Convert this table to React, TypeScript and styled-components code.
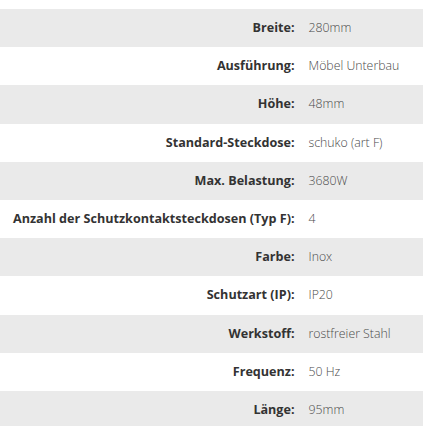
import React from "react";
import styled, { createGlobalStyle } from "styled-components";

const Global = createGlobalStyle`
  html, body { margin: 0; padding: 0; background: #fff; }
  body { font-family: "Open Sans", "Liberation Sans", sans-serif; }
`;

const Wrapper = styled.div`
  padding-top: 9px;
`;

const Table = styled.table`
  width: 100%;
  border-collapse: collapse;
  border-spacing: 0;
`;

const Row = styled.tr<{ $shaded: boolean }>`
  background: ${(p) => (p.$shaded ? "#eaeaea" : "#ffffff")};
`;

const Label = styled.th`
  text-align: right;
  white-space: nowrap;
  font-size: 12.6px;
  font-weight: 700;
  color: #333333;
  padding: 10px 7px 10px 13px;
  line-height: 18.2px;
  vertical-align: middle;
`;

const Value = styled.td`
  width: 100%;
  text-align: left;
  font-size: 12.3px;
  font-weight: 300;
  color: #4a4a4a;
  padding: 10px 7px;
  line-height: 18.2px;
  vertical-align: middle;
`;

const specs: [string, string][] = [
  ["Breite:", "280mm"],
  ["Ausführung:", "Möbel Unterbau"],
  ["Höhe:", "48mm"],
  ["Standard-Steckdose:", "schuko (art F)"],
  ["Max. Belastung:", "3680W"],
  ["Anzahl der Schutzkontaktsteckdosen (Typ F):", "4"],
  ["Farbe:", "Inox"],
  ["Schutzart (IP):", "IP20"],
  ["Werkstoff:", "rostfreier Stahl"],
  ["Frequenz:", "50 Hz"],
  ["Länge:", "95mm"],
];

export default function App() {
  return (
    <>
      <Global />
      <Wrapper>
        <Table>
          <tbody>
            {specs.map(([k, v], i) => (
              <Row key={k} $shaded={i % 2 === 0}>
                <Label>{k}</Label>
                <Value>{v}</Value>
              </Row>
            ))}
          </tbody>
        </Table>
      </Wrapper>
    </>
  );
}
